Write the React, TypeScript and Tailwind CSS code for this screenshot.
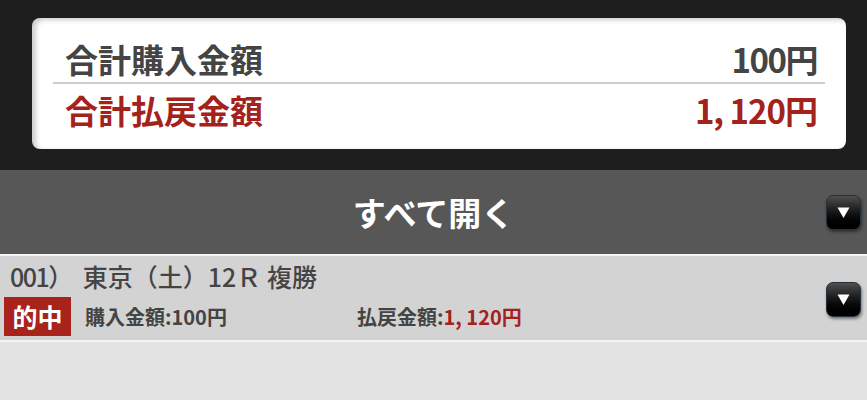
function DownButton() {
  return (
    <div className="w-[35px] h-[35px] rounded-[7px] border border-[#25303c] bg-gradient-to-b from-[#505050] via-[#161616] to-black shadow-[1px_2px_3px_rgba(0,0,0,0.45)] flex items-center justify-center">
      <svg width="13" height="13" viewBox="0 0 13 13">
        <polygon points="0.5,1.5 12.5,1.5 6.5,12" fill="#ffffff" />
      </svg>
    </div>
  );
}

export default function App() {
  return (
    <div className="w-[867px] h-[400px] overflow-hidden bg-[#e3e3e3] font-['Noto_Sans_CJK_JP','Noto_Sans',sans-serif]">
      {/* summary */}
      <div className="bg-[#1e1e1e] h-[170px] pt-[18px] px-[21px]">
        <div className="ml-[11px] w-[814px] h-[131px] bg-white rounded-[8px] shadow-[inset_4px_2px_5px_rgba(0,0,0,0.2)] px-[21px] pt-[18px]">
          <div className="h-[46px] flex items-center justify-between pl-3 pr-2 text-[#444444] font-bold text-[33px] leading-none">
            <span>合計購入金額</span>
            <span className="tracking-[-1.5px] font-semibold">100円</span>
          </div>
          <div className="h-[2px] bg-[#cccccc]" />
          <div className="h-[52px] flex items-center justify-between pl-3 pr-2 text-[#a3221c] font-bold text-[33px] leading-none">
            <span>合計払戻金額</span>
            <span className="tracking-[-1px] font-semibold">1, 120円</span>
          </div>
        </div>
      </div>

      {/* open all bar */}
      <div className="relative h-[84px] bg-[#575757] flex items-center justify-center">
        <span className="text-white font-bold text-[33px] leading-none">すべて開く</span>
        <div className="absolute right-[6px] top-[25px]">
          <DownButton />
        </div>
      </div>

      {/* item */}
      <div className="border-t-2 border-[#f4f4f4] bg-[#d3d3d3] h-[88px] border-b-2 flex items-start justify-between pr-[6px]">
        <div className="flex flex-col">
          <div className="h-[41px] flex items-center pl-[10px] text-[#444444] font-medium text-[25px] leading-none">
            <span className="tracking-[-1.5px]">001）</span>
            <span className="ml-[11px]">東京（土）12Ｒ 複勝</span>
          </div>
          <div className="flex items-center">
            <span className="ml-[4px] w-[67px] h-[39px] bg-[#a8231b] text-white font-bold text-[25px] leading-none flex items-center justify-center">的中</span>
            <span className="ml-[14px] w-[272px] text-[#444444] font-bold text-[20px] leading-none">購入金額:100円</span>
            <span className="text-[#444444] font-bold text-[20px] leading-none">
              払戻金額:<span className="text-[#a3221c]">1, 120円</span>
            </span>
          </div>
        </div>
        <div className="mt-[26px]">
          <DownButton />
        </div>
      </div>
    </div>
  );
}
